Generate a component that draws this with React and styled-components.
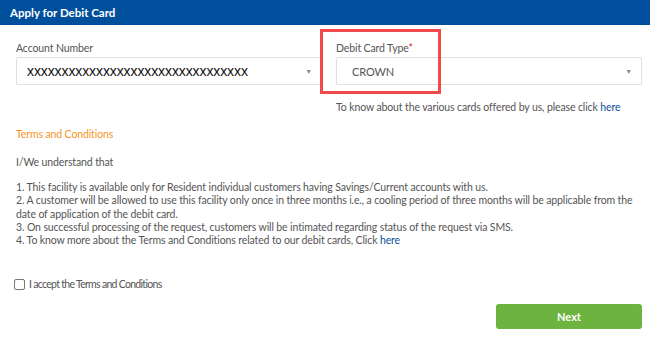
import React from 'react';
import styled, { createGlobalStyle } from 'styled-components';

const GlobalStyle = createGlobalStyle`
  html, body {
    margin: 0;
    padding: 0;
    background: #fff;
  }
  body {
    font-family: Lato, 'Open Sans', sans-serif;
  }
`;

function App() {
  return (
    <>
      <GlobalStyle />
      <Page>
        <Header>Apply for Debit Card</Header>
        <Form>
          <Fields>
            <Field>
              <Label>Account Number</Label>
              <Select>
                <AccountValue>xxxxxxxxxxxxxxxxxxxxxxxxxxxxxxxx</AccountValue>
                <Arrow>▼</Arrow>
              </Select>
            </Field>
            <Field>
              <Highlight />
              <Label>
                Debit Card Type<Required>*</Required>
              </Label>
              <Select>
                <CardValue>CROWN</CardValue>
                <Arrow>▼</Arrow>
              </Select>
              <Help>
                To know about the various cards offered by us, please click <Link>here</Link>
              </Help>
            </Field>
          </Fields>

          <TermsTitle>Terms and Conditions</TermsTitle>
          <Paragraph>I/We understand that</Paragraph>
          <Terms>
            <li>1. This facility is available only for Resident individual customers having Savings/Current accounts with us.</li>
            <li>
              2. A customer will be allowed to use this facility only once in three months i.e., a cooling period of three months will be applicable from the
              date of application of the debit card.
            </li>
            <li>3. On successful processing of the request, customers will be intimated regarding status of the request via SMS.</li>
            <li>
              4. To know more about the Terms and Conditions related to our debit cards, Click <Link>here</Link>
            </li>
          </Terms>

          <Accept>
            <Box />
            <AcceptText>I accept the Terms and Conditions</AcceptText>
          </Accept>

          <Actions>
            <NextButton>Next</NextButton>
          </Actions>
        </Form>
      </Page>
    </>
  );
}

export default App;

const Page = styled.div`
  width: 650px;
  height: 344px;
  overflow: hidden;
  background: #fff;
  color: #555;
  font-size: 10.5px;
  letter-spacing: -0.12px;
`;

const Header = styled.div`
  height: 25px;
  background: #004f9d;
  color: #fff;
  font-size: 11.5px;
  font-weight: 700;
  letter-spacing: 0;
  line-height: 25px;
  padding-left: 10px;
`;

const Form = styled.div`
  padding: 16px 8px 0 16px;
`;

const Fields = styled.div`
  display: grid;
  grid-template-columns: 1fr 1fr;
  column-gap: 14px;
`;

const Field = styled.div`
  position: relative;
`;

const Highlight = styled.div`
  position: absolute;
  left: -16px;
  top: -12px;
  width: 115px;
  height: 59px;
  border: 3px solid #f24a4a;
  pointer-events: none;
`;

const Label = styled.div`
  line-height: 14px;
  color: #555;
  margin-bottom: 2px;
`;

const Required = styled.span`
  color: #d9262c;
`;

const Select = styled.div`
  height: 28px;
  box-sizing: border-box;
  border: 1px solid #e1e1e1;
  border-radius: 2px;
  display: flex;
  align-items: center;
  justify-content: space-between;
  padding: 0 9px 0 10px;
`;

const AccountValue = styled.span`
  font-family: 'Liberation Sans', Arial, sans-serif;
  font-size: 14px;
  color: #111;
  letter-spacing: -0.1px;
`;

const CardValue = styled.span`
  font-size: 11px;
  color: #555;
  padding-left: 5px;
`;

const Arrow = styled.span`
  font-size: 7px;
  color: #888;
`;

const Help = styled.div`
  margin-top: 15px;
  line-height: 14px;
  color: #555;
`;

const Link = styled.span`
  color: #0b4f9c;
`;

const TermsTitle = styled.div`
  margin-top: 13px;
  line-height: 14px;
  color: #f7941e;
`;

const Paragraph = styled.div`
  margin-top: 14px;
  line-height: 14px;
`;

const Terms = styled.ul`
  list-style: none;
  margin: 12px 0 0;
  padding: 0;
  line-height: 13.3px;
  padding-right: 6px;
`;

const Accept = styled.label`
  display: flex;
  align-items: center;
  gap: 4px;
  margin-top: 31px;
  margin-left: -2px;
`;

const Box = styled.span`
  width: 9px;
  height: 9px;
  border: 1px solid #777;
  border-radius: 2px;
`;

const AcceptText = styled.span`
  font-size: 10.5px;
  color: #555;
  letter-spacing: -0.7px;
`;

const Actions = styled.div`
  display: flex;
  justify-content: flex-end;
  margin-top: 14px;
`;

const NextButton = styled.button`
  width: 146px;
  height: 25px;
  border: none;
  border-radius: 3px;
  background: #6cb33f;
  color: #fff;
  font-family: Lato, sans-serif;
  font-size: 11px;
  font-weight: 700;
`;
